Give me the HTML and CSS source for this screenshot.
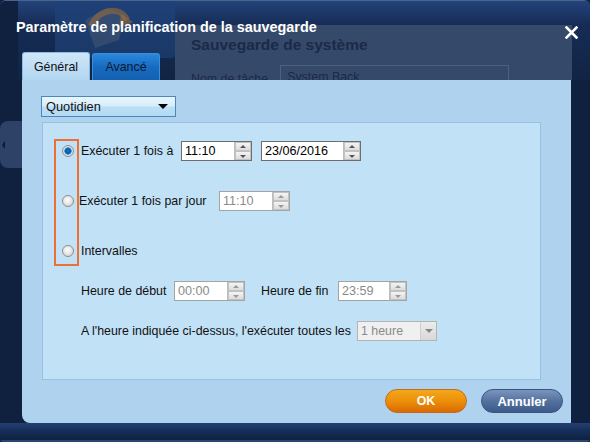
FILE: index.html
```html
<!DOCTYPE html>
<html lang="fr">
<head>
<meta charset="utf-8">
<link rel="stylesheet" href="styles.css">
</head>
<body>
<div class="dialog">
  <div class="head">
    <div class="backdrop">
      <div class="bd-icon">
        <svg width="120" height="58" viewBox="0 0 120 58">
          <path d="M30 20 L52 8 L70 16 L64 40 L40 48 Z" fill="#4a5a70" opacity="0.5"/>
          <path d="M36 26 C44 8 66 6 72 20" stroke="#9a6c3a" stroke-width="6" fill="none" opacity="0.6"/>
          <path d="M66 14 L78 22 L64 28 Z" fill="#9a6c3a" opacity="0.6"/>
        </svg>
      </div>
      <div class="bd-app">
        <div class="bd-title">Sauvegarde de système</div>
        <div class="bd-row"><span>Nom de tâche</span><span class="bd-input">System Back</span></div>
      </div>
      <div class="bd-side"></div>
    </div>
    <div class="titlebar">
      <span class="title">Paramètre de planification de la sauvegarde</span>
      <svg class="close" width="13" height="13" viewBox="0 0 13 13"><path d="M1.5 1.5 L11.5 11.5 M11.5 1.5 L1.5 11.5" stroke="#fff" stroke-width="2.6" stroke-linecap="square"/></svg>
    </div>
    <div class="tabs">
      <div class="tab active">Général</div>
      <div class="tab">Avancé</div>
    </div>
  </div>
  <div class="middle">
    <div class="gutter"><div class="gutter-patch"><span class="gutter-arrow"></span></div></div>
    <div class="panel">
      <div class="combo"><span>Quotidien</span><span class="combo-arrow"></span></div>
      <div class="box">
        <div class="highlight"></div>
        <div class="row r1">
          <span class="radio on"></span>
          <span class="lbl w1">Exécuter 1 fois à</span>
          <span class="spin w70"><span class="val">11:10</span><span class="btns"><span class="up"></span><span class="dn"></span></span></span>
          <span class="spin w100 ml10"><span class="val">23/06/2016</span><span class="btns"><span class="up"></span><span class="dn"></span></span></span>
        </div>
        <div class="row r2">
          <span class="radio"></span>
          <span class="lbl w2">Exécuter 1 fois par jour</span>
          <span class="spin w70 dis"><span class="val">11:10</span><span class="btns"><span class="up"></span><span class="dn"></span></span></span>
        </div>
        <div class="row r3">
          <span class="radio"></span>
          <span class="lbl">Intervalles</span>
        </div>
        <div class="row r4">
          <span class="lbl w4">Heure de début</span>
          <span class="spin w70 dis"><span class="val">00:00</span><span class="btns"><span class="up"></span><span class="dn"></span></span></span>
          <span class="lbl w5">Heure de fin</span>
          <span class="spin w69 dis"><span class="val">23:59</span><span class="btns"><span class="up"></span><span class="dn"></span></span></span>
        </div>
        <div class="row r5">
          <span class="lbl w6">A l'heure indiquée ci-dessus, l'exécuter toutes les</span>
          <span class="dsel"><span>1 heure</span><span class="dsel-btn"><span class="tri"></span></span></span>
        </div>
      </div>
      <div class="actions">
        <button class="btn ok">OK</button>
        <button class="btn cancel">Annuler</button>
      </div>
    </div>
    <div class="gutter-r"></div>
  </div>
  <div class="foot"></div>
</div>
</body>
</html>
```
FILE: styles.css
```css
* { box-sizing: border-box; }
html, body { margin: 0; padding: 0; background: #10203f; }
body { font-family: Tahoma, "Liberation Sans", "DejaVu Sans", sans-serif; font-size: 12.4px; color: #111; }

.dialog {
  width: 590px; height: 442px;
  background: #10213f;
  display: flex; flex-direction: column;
  border-radius: 6px 6px 4px 4px;
  overflow: hidden;
  border-top: 1px solid #4a6490;
}

.head { height: 79px; position: relative; display: flex; flex-direction: column;
  background: linear-gradient(#23437a, #162c56 30%, #112443); }
.backdrop { position: absolute; inset: 0; overflow: hidden; }
.bd-icon { position: absolute; left: 55px; top: -1px; width: 120px; height: 58px;
  background: linear-gradient(#1f4178, #1a3866); border-radius: 0 0 4px 0; }
.bd-app { position: absolute; left: 175px; top: 24px; right: 18px; bottom: 0;
  background: #35496a; padding: 11px 0 0 16px; }
.bd-title { font-weight: bold; font-size: 15.5px; color: #1a2a48; }
.bd-row { display: flex; gap: 12px; margin-top: 18px; color: #1a2a48; font-size: 12.4px; align-items: flex-start; }
.bd-input { width: 229px; height: 20px; border: 1px solid #4e6080; padding: 4px 0 0 6px; margin-top: -7px; }
.bd-side { position: absolute; left: 0; top: 0; width: 18px; height: 80px; background: #10203f; }

.titlebar { position: relative; display: flex; align-items: center; justify-content: space-between;
  padding: 14px 12px 0 16px; height: 38px; }
.title { color: #fff; font-weight: bold; font-size: 14.4px; font-family: Tahoma, "Liberation Sans", sans-serif; }
.close { margin-top: 11px; }

.tabs { position: relative; display: flex; gap: 2px; margin-left: 22px; margin-top: 14px; }
.tab { width: 68px; height: 27px; border-radius: 3px 3px 0 0; display: flex; align-items: center; justify-content: center;
  font-size: 12.4px; color: #0a1a33; background: linear-gradient(#2a88dc, #176bc0 50%, #1460b0); border: 1px solid #3a90d8; border-bottom: none; }
.tab.active { background: linear-gradient(#cfe6f8, #b2d6f1); border-color: #8abde6; color: #111; height: 28px; margin-top: -1px; }

.middle { display: flex; height: 343px; }
.gutter { width: 22px; background: #10213f; padding-top: 41px; }
.gutter-patch { height: 47px; width: 22px; background: #2d4266; border-radius: 8px 0 0 8px; display: flex; align-items: center; }
.gutter-arrow { margin-left: 2px; width: 0; height: 0; border-top: 4px solid transparent; border-bottom: 4px solid transparent; border-right: 3px solid #0c1a33; }
.gutter-r { width: 19px; background: #10213f; }
.panel { width: 549px; background: #afd3ee; padding: 16px 0 0 19px; position: relative; display: flex; flex-direction: column; border-radius: 0 0 0 8px; }

.combo { width: 135px; height: 21px; border: 1px solid #4b86bd; background: linear-gradient(#eaf6fd, #d6edfa 45%, #b9def5 55%, #b4daf3);
  display: flex; align-items: center; justify-content: space-between; padding: 0 7px 0 4px; font-size: 12.8px; }
.combo-arrow { width: 0; height: 0; border-left: 5px solid transparent; border-right: 5px solid transparent; border-top: 5px solid #000; }

.box { position: relative; margin: 5px 0 0 1px; width: 499px; height: 258px; background: #c1e1f7; border: 1px solid #98c1e0; padding-top: 18px; }
.highlight { position: absolute; left: 11px; top: 16px; width: 25px; height: 127px; border: 2px solid #ee7035; }

.row { display: flex; align-items: center; height: 20px; }
.r1 { padding-left: 19px; }
.r2 { padding-left: 19px; margin-top: 30px; }
.r3 { padding-left: 19px; margin-top: 30px; }
.r4 { padding-left: 38px; margin-top: 20px; }
.r5 { padding-left: 38px; margin-top: 20px; }
.r1 .lbl { margin-left: 7px; }
.r2 .lbl { margin-left: 5px; }
.r3 .lbl { margin-left: 7px; }

.radio { width: 12px; height: 12px; border-radius: 50%; border: 1px solid #8e8e8e;
  background: radial-gradient(circle at 45% 40%, #ffffff, #e4e4e4 50%, #c8c8c8); flex: none; }
.radio.on { background: radial-gradient(circle, #0f78c8 0, #0a5aa0 2.5px, #3aa0e8 3.5px, #e8e8e8 4px, #cfcfcf 6px); }

.lbl { white-space: nowrap; }
.w1 { width: 100px; }
.w2 { width: 140px; }
.w4 { width: 93px; }
.w5 { width: 77px; margin-left: 16px; }
.w6 { width: 276px; }

.spin { height: 20px; display: flex; border: 1px solid #6e6e6e; background: #fff; flex: none; }
.spin .val { flex: 1; padding: 2px 0 0 3px; font-size: 12.6px; color: #000; }
.spin .btns { width: 17px; display: flex; flex-direction: column; border-left: 1px solid #bdbdbd; }
.spin .up, .spin .dn { flex: 1; position: relative; background: linear-gradient(#f4f4f4, #dcdcdc); border: 1px solid #c2c2c2; }
.spin .up::after, .spin .dn::after { content: ""; position: absolute; left: 4px; top: 2px; border-left: 3.5px solid transparent; border-right: 3.5px solid transparent; }
.spin .up::after { border-bottom: 3px solid #555; }
.spin .dn::after { border-top: 3px solid #555; top: 3px; }
.spin.dis { border-color: #a4a4a4; }
.spin.dis .val { color: #8a8a8a; }
.spin.dis .up::after { border-bottom-color: #999; }
.spin.dis .dn::after { border-top-color: #999; }
.w70 { width: 71px; }
.w69 { width: 69px; }
.w100 { width: 100px; }
.ml10 { margin-left: 9px; }

.dsel { width: 80px; height: 20px; border: 1px solid #b4b4b4; background: #f0f0f0; display: flex; align-items: center; justify-content: space-between; color: #8a8a8a; padding-left: 3px; }
.dsel-btn { width: 16px; height: 18px; display: flex; align-items: center; justify-content: center; background: linear-gradient(#ececec, #d8d8d8); border-left: 1px solid #cfcfcf; }
.tri { width: 0; height: 0; border-left: 4px solid transparent; border-right: 4px solid transparent; border-top: 4px solid #888; }

.actions { display: flex; gap: 14px; justify-content: flex-end; padding-right: 8px; margin-top: 9px; }
.btn { width: 82px; height: 24px; border-radius: 12px; font-weight: bold; color: #fff; font-family: Tahoma, "Liberation Sans", sans-serif; font-size: 13px; padding: 0; }
.btn.ok { background: linear-gradient(#f3a81a, #ec8f0a 50%, #d96a00); border: 1px solid #c66a22; font-size: 12.4px; }
.btn.cancel { background: linear-gradient(#7a94bc, #5472a0 50%, #3d5a88); border: 1px solid #3a5480; }

.foot { flex: 1; background: linear-gradient(#243f74, #16305c 40%, #10213f); border-bottom: 2px solid #2a4670; }
```
